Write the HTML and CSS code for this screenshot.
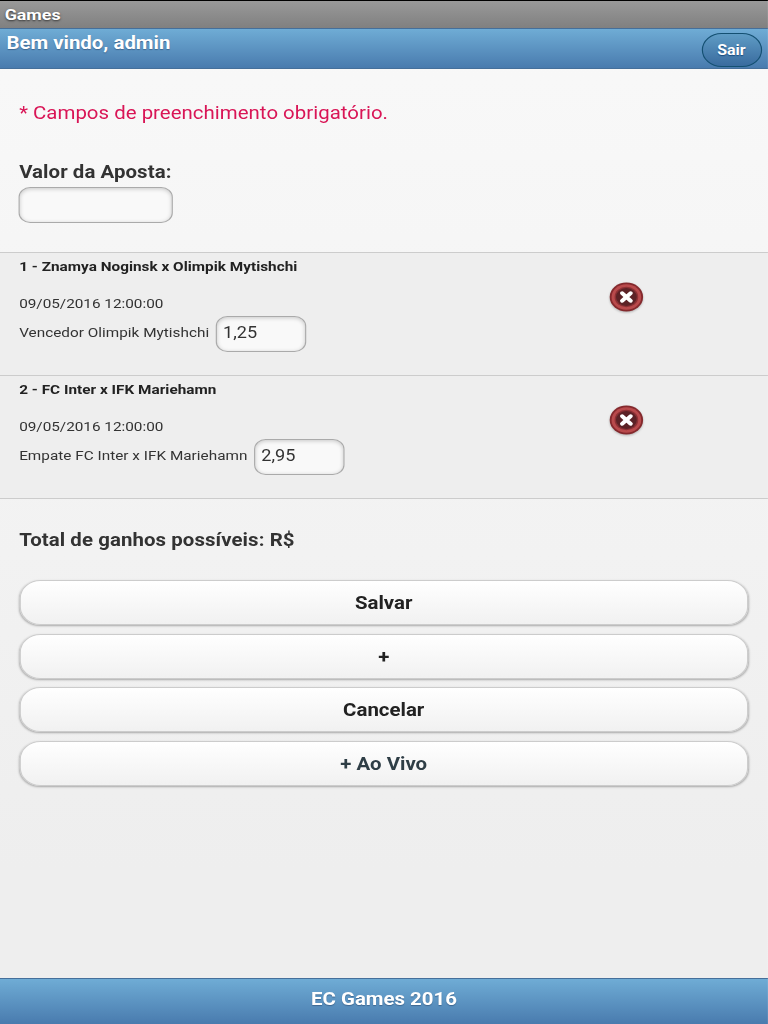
FILE: index.html
```html
<!DOCTYPE html>
<html lang="pt-BR">
<head>
    <meta charset="UTF-8" />
    <meta name="viewport" content="width=device-width, initial-scale=1.0" />
    <title>Games</title>
    <link rel="stylesheet" href="styles.css">
</head>
<body>
<div class="page">
    <div class="titlebar">Games</div>

    <header class="header">
        <span class="welcome">Bem vindo, admin</span>
        <a class="logout" href="#">Sair</a>
    </header>

    <main class="content">
        <p class="required">* Campos de preenchimento obrigatório.</p>
        <label class="label" for="valor">Valor da Aposta:</label>
        <input class="input input-valor" type="text" id="valor">

        <ul class="bets">
            <li class="bet">
                <div class="bet-info">
                    <h3>1 - Znamya Noginsk x Olimpik Mytishchi</h3>
                    <p>09/05/2016 12:00:00</p>
                    <div class="odd"><span>Vencedor Olimpik Mytishchi</span><input class="input input-odd" type="text" value="1,25"></div>
                </div>
                <svg class="remove" viewBox="0 0 30 30">
                    <circle cx="15" cy="15" r="14.4" fill="#84292d"/>
                    <circle cx="15" cy="15" r="12.8" fill="#b94a4c"/>
                    <circle cx="15" cy="15" r="10.2" fill="#8c3034"/>
                    <circle cx="15" cy="15" r="9" fill="#5c2226"/>
                    <path d="M11.4 11.2l7.2 7.6M18.6 11.2l-7.2 7.6" stroke="#fff" stroke-width="3.8" stroke-linecap="round"/>
                </svg>
            </li>
            <li class="bet">
                <div class="bet-info">
                    <h3>2 - FC Inter x IFK Mariehamn</h3>
                    <p>09/05/2016 12:00:00</p>
                    <div class="odd"><span>Empate FC Inter x IFK Mariehamn</span><input class="input input-odd" type="text" value="2,95"></div>
                </div>
                <svg class="remove" viewBox="0 0 30 30">
                    <circle cx="15" cy="15" r="14.4" fill="#84292d"/>
                    <circle cx="15" cy="15" r="12.8" fill="#b94a4c"/>
                    <circle cx="15" cy="15" r="10.2" fill="#8c3034"/>
                    <circle cx="15" cy="15" r="9" fill="#5c2226"/>
                    <path d="M11.4 11.2l7.2 7.6M18.6 11.2l-7.2 7.6" stroke="#fff" stroke-width="3.8" stroke-linecap="round"/>
                </svg>
            </li>
        </ul>

        <p class="total">Total de ganhos possíveis: R$</p>

        <div class="buttons">
            <button class="btn">Salvar</button>
            <button class="btn">+</button>
            <button class="btn">Cancelar</button>
            <a class="btn btn-link" href="#">+ Ao Vivo</a>
        </div>
    </main>

    <footer class="footer">EC Games 2016</footer>
</div>
</body>
</html>
```
FILE: styles.css
```css
* {
    box-sizing: border-box;
}

body {
    margin: 0;
    height: 1024px;
    overflow: hidden;
    font-family: Roboto, sans-serif;
    color: #333;
}

/* wide pixels: everything is stretched horizontally */
.page {
    display: flex;
    flex-direction: column;
    width: 662.07px;
    height: 1024px;
    transform: scaleX(1.16);
    transform-origin: 0 0;
    font-size: 17.6px;
    background: linear-gradient(#f9f9f9, #eee 85%);
}

h3, p, ul {
    margin: 0;
    padding: 0;
}

.titlebar {
    height: 28px;
    padding-left: 4px;
    border-top: 1px solid #000;
    background: linear-gradient(#999, #808080);
    color: #fff;
    font-size: 15.4px;
    font-weight: bold;
    line-height: 28px;
    text-shadow: 0 1px 2px #333;
}

.header {
    display: flex;
    justify-content: space-between;
    height: 41px;
    padding: 4px 5.5px 0;
    border-top: 1px solid #456f9a;
    border-bottom: 1px solid #456f9a;
    background: linear-gradient(#6facd5, #497bae);
    color: #fff;
    font-weight: bold;
    text-shadow: 0 1px 1px #3e6790;
}

.welcome {
    line-height: 20px;
}

.logout {
    width: 52px;
    height: 34px;
    border: 1px solid #145072;
    border-radius: 17px;
    background: linear-gradient(#5f9cc5, #396b9e);
    color: #fff;
    font-size: 13.8px;
    line-height: 32px;
    text-align: center;
    text-decoration: none;
    text-shadow: 0 1px 1px #194b7e;
}

.content {
    flex: 1;
    padding: 33px 16.5px 0;
}

.required {
    color: #d91556;
    letter-spacing: 0.02px;
    line-height: 22px;
}

.label {
    display: block;
    margin-top: 37px;
    font-weight: bold;
    letter-spacing: 0.06px;
    line-height: 22px;
}

.input {
    display: block;
    height: 36px;
    padding: 0 5px 3px;
    border: 1px solid #aaa;
    border-radius: 10px;
    background: #f9f9f9;
    box-shadow: inset 0 1px 4px rgba(0,0,0,0.2);
    color: #333;
    font-family: inherit;
    font-size: 15.6px;
}

.input-valor {
    width: 132.5px;
    margin-top: 4px;
    margin-left: -0.3px;
}

.input-odd {
    width: 77.5px;
    margin-left: 6px;
}

.bets {
    margin: 29px -16.5px 0;
    border-bottom: 1px solid #ccc;
    list-style: none;
}

.bet {
    display: flex;
    height: 123px;
    padding: 5px 16.5px 0;
    border-top: 1px solid #ccc;
    background: #eee;
    font-size: 13.2px;
}

.bet-info {
    width: 508px;
}

.bet h3 {
    color: #222;
    font-size: 13.2px;
    letter-spacing: 0.02px;
    line-height: 18px;
}

.bet p {
    margin-top: 19px;
    line-height: 18px;
}

.odd {
    display: flex;
    align-items: center;
    margin-top: 3px;
}

.odd span {
    padding-bottom: 3px;
    letter-spacing: 0.02px;
}

.remove {
    width: 30px;
    height: 30px;
    margin-top: 24px;
    filter: drop-shadow(0 1px 1px rgba(0,0,0,0.25));
}

.total {
    margin-top: 30px;
    font-weight: bold;
    letter-spacing: 0.07px;
    line-height: 22px;
}

.buttons {
    display: flex;
    flex-direction: column;
    gap: 8.5px;
    margin: 29px 0.5px 0 0;
}

.btn {
    height: 45px;
    padding: 0;
    border: 1px solid #ccc;
    border-radius: 18px;
    background: linear-gradient(#fff, #f1f1f1);
    box-shadow: 0 1px 2px rgba(0,0,0,0.3);
    color: #222;
    font-family: inherit;
    font-size: 17.6px;
    font-weight: bold;
    line-height: 45px;
    text-align: center;
    text-decoration: none;
}

.btn-link {
    color: #2f3e46;
}

.footer {
    height: 46px;
    border-top: 1px solid #456f9a;
    background: linear-gradient(#6facd5, #497bae);
    color: #fff;
    font-weight: bold;
    line-height: 41px;
    text-align: center;
    text-shadow: 0 1px 1px #3e6790;
}
```
